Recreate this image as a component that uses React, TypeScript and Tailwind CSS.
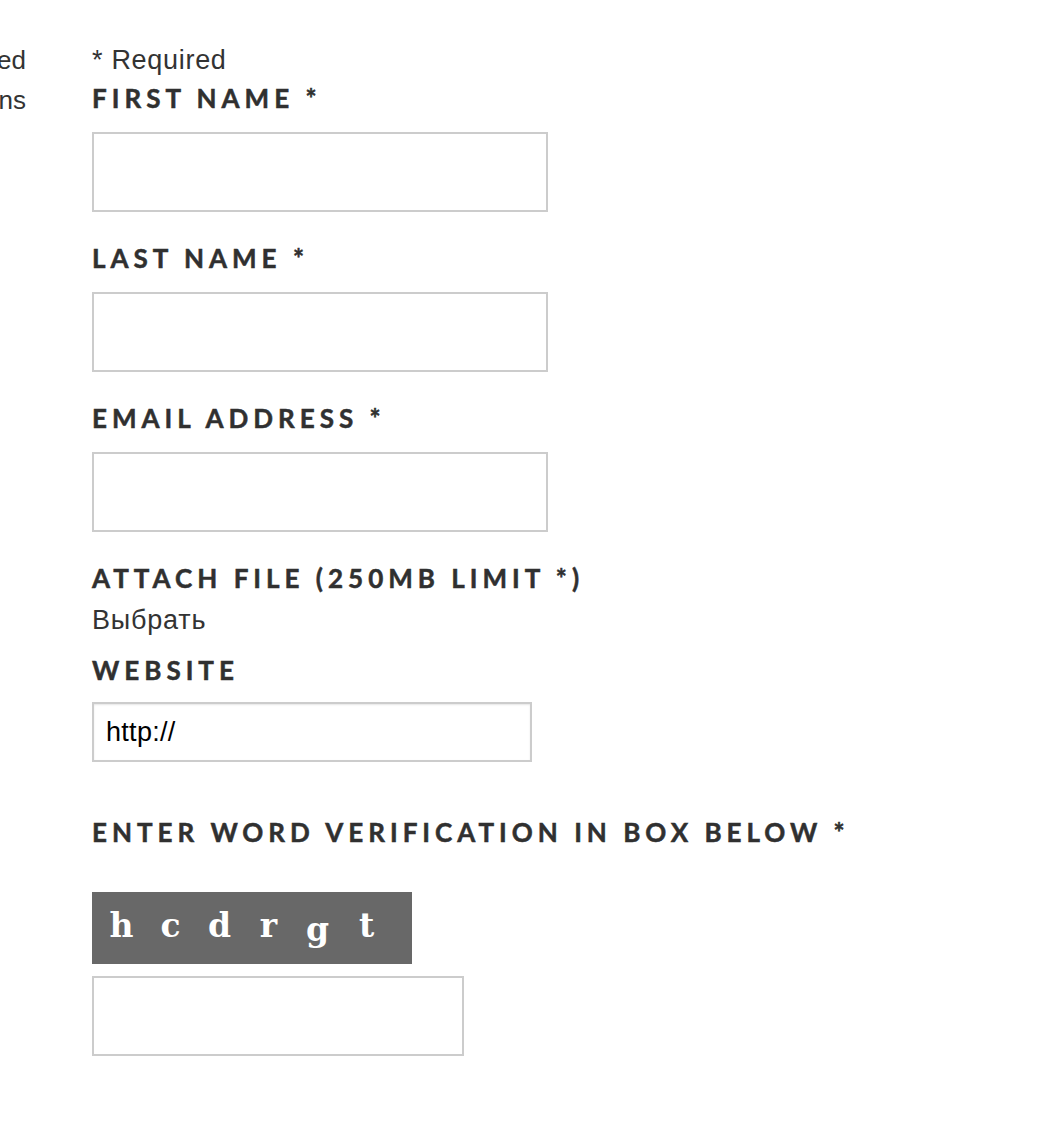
import React from "react";

const labelCls =
  "block font-['Lato',sans-serif] font-bold text-[26px] leading-[36px] tracking-[5px] text-[#303030] [-webkit-text-stroke:0.5px_#303030] uppercase whitespace-nowrap";

function Field({ label, first }: { label: string; first?: boolean }) {
  return (
    <div className={first ? "" : "mt-[28px]"}>
      <label className={labelCls}>{label}</label>
      <input
        type="text"
        className="mt-[16px] block h-[80px] w-[456px] border-2 border-[#cccccc] bg-white outline-none"
      />
    </div>
  );
}

export default function App() {
  const letters = ["h", "c", "d", "r", "g", "t"];
  return (
    <div className="min-h-[1124px] w-[1060px] bg-white font-['Liberation_Sans',Arial,sans-serif] text-[#333333]">
      <div className="flex">
        <div className="w-[26px] shrink-0 overflow-hidden pt-[40px]">
          <div className="flex flex-col items-end text-[26px] leading-[40px] whitespace-nowrap">
            <span>Checked</span>
            <span>Questions</span>
          </div>
        </div>
        <div className="ml-[66px] flex flex-col pt-[40px] pb-[68px]">
          <p className="text-[27px] leading-[40px] tracking-[0.7px]">* Required</p>
          <Field label="First Name *" first />
          <Field label="Last Name *" />
          <Field label="Email Address *" />
          <div className="mt-[28px]">
            <label className={labelCls}>Attach File (250MB limit *)</label>
          </div>
          <div className="mt-[4px] text-[27px] leading-[40px] tracking-[0.8px]">Выбрать</div>
          <label className={`${labelCls} mt-[12px]`}>Website</label>
          <input
            type="text"
            defaultValue="http://"
            className="mt-[14px] block h-[60px] w-[440px] border-2 border-[#cccccc] bg-white px-[12px] text-[27px] tracking-[0.3px] text-black shadow-[inset_0_1px_2px_rgba(0,0,0,0.1)] outline-none"
          />
          <label className={`${labelCls} mt-[52px]`}>Enter word verification in box below *</label>
          <div className="mt-[42px] flex h-[72px] w-[320px] items-center bg-[#686868] pl-[5px] pb-[6px]">
            {letters.map((l, i) => (
              <span
                key={i}
                className={`w-[49px] text-center font-['DejaVu_Serif',serif] font-bold text-[33px] leading-none text-white ${
                  l === "g" ? "translate-y-[4px]" : ""
                }`}
              >
                {l}
              </span>
            ))}
          </div>
          <input
            type="text"
            className="mt-[12px] block h-[80px] w-[372px] border-2 border-[#cccccc] bg-white outline-none"
          />
        </div>
      </div>
    </div>
  );
}
